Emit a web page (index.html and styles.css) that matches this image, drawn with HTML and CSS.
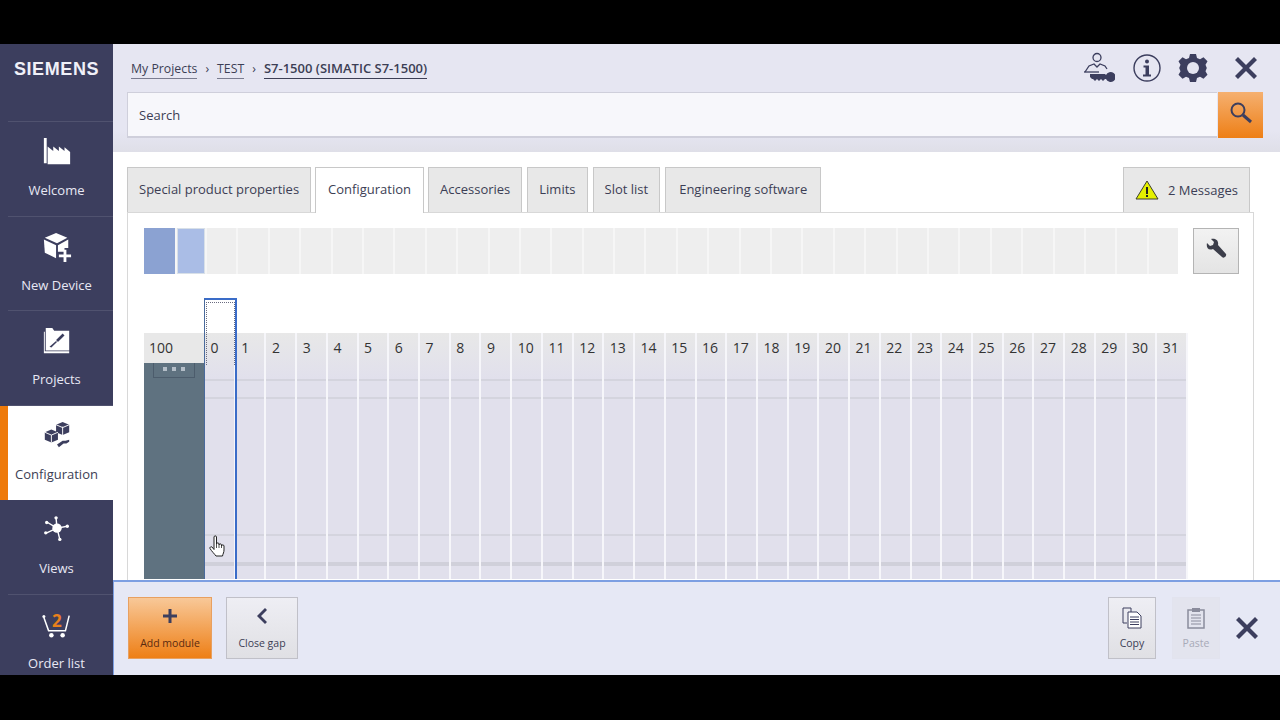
FILE: index.html
```html
<!DOCTYPE html>
<html lang="en">
<head>
  <meta charset="UTF-8" />
  <title>S7-1500 - Configuration</title>
  <link rel="stylesheet" href="styles.css">
</head>
<body>

<div class="app">
  <nav class="sidebar">
    <div class="brand">SIEMENS</div>
    <a class="nav-item">
      <svg class="nav-icon" viewBox="0 0 32 32"><path d="M2 1h3v27H2zM6 10l6 5v-5l6 5v-5l6 5v-4l6 5v13H6z" fill="#fff"/></svg>
      <span>Welcome</span>
    </a>
    <a class="nav-item">
      <svg class="nav-icon" viewBox="0 0 32 32"><path d="M15 1l12 5-11 6L3 6z" fill="#fff"/><path d="M2 8l13 6v14L3 22z" fill="#fff"/><path d="M17 14l11-6v9h-4v4h-7z" fill="#fff"/><path d="M23 19h3v5h5v3h-5v5h-3v-5h-5v-3h5z" fill="#fff"/></svg>
      <span>New Device</span>
    </a>
    <a class="nav-item">
      <svg class="nav-icon" viewBox="0 0 32 32"><path d="M4 2h7l2 3h16v21H4z" fill="#fff"/><path d="M2 27h27v2H2zM2 6h1v21H2z" fill="#fff"/><path d="M22 8l2 2-7 7-2-2zM15 16l1 1-6 6-2-1z" fill="#3c3e5e"/></svg>
      <span>Projects</span>
    </a>
    <a class="nav-item active">
      <svg class="nav-icon" viewBox="0 0 32 32"><path d="M22 1l7 3v8l-7 3-7-3V4z" fill="#3c3e5e"/><path d="M10 9l7 3v8l-7 3-7-3v-8z" fill="#3c3e5e"/><path d="M16 25l6-4 3 0 4-1 0 2-3 2-3 0-5 4z" fill="#3c3e5e"/><path d="M22 6v9M15 4l7 3 7-3M3 12l7 3v8M10 15l7-3" stroke="#fff" fill="none"/></svg>
      <span>Configuration</span>
    </a>
    <a class="nav-item">
      <svg class="nav-icon" viewBox="0 0 32 32"><g stroke="#fff" stroke-width="1.5"><path d="M16 14L15 3M16 14l11-2M16 14l-10-6M16 14L5 19M16 14l3 12"/></g><circle cx="16" cy="14" r="5" fill="#fff"/><g fill="#fff"><circle cx="15" cy="3" r="1.8"/><circle cx="27" cy="12" r="1.8"/><circle cx="5" cy="8" r="1.8"/><circle cx="4" cy="19" r="1.8"/><circle cx="19" cy="26" r="1.8"/></g></svg>
      <span>Views</span>
    </a>
    <a class="nav-item cart">
      <svg class="nav-icon" viewBox="0 0 32 32"><path d="M2 8l5 14h18l4-16" stroke="#fff" stroke-width="1.6" fill="none"/><circle cx="2" cy="7" r="1.6" fill="#fff"/><circle cx="10" cy="27" r="2.4" fill="#fff"/><circle cx="22" cy="27" r="2.4" fill="#fff"/></svg>
      <b class="cart-count">2</b>
      <span>Order list</span>
    </a>
  </nav>

  <div class="main">
    <header class="top">
      <div class="crumbs-row">
        <div class="crumbs">
          <a>My Projects</a><i>›</i><a>TEST</a><i>›</i><a class="current">S7-1500 (SIMATIC S7-1500)</a>
        </div>
        <div class="top-icons">
          <svg width="32" height="32" viewBox="0 0 32 32"><circle cx="14" cy="5.500" r="4" fill="none" stroke="#3c3e5e" stroke-width="1.3"/><path d="M2 20l4-6 5-2 3 3 3-3 5 2 2 3" fill="none" stroke="#3c3e5e" stroke-width="1.3"/><path d="M1 20h15" stroke="#3c3e5e" stroke-width="1.3"/><path d="M7 22h15l1 1a5 5 0 1 1 0 4l-1 0-2 2-2-2-2 2-2-2-2 2-2-2H9l-2-2z" fill="#3c3e5e"/></svg>
          <svg width="30" height="30" viewBox="0 0 30 30"><circle cx="15" cy="15" r="13" fill="none" stroke="#3c3e5e" stroke-width="1.4"/><circle cx="15" cy="8.5" r="2" fill="#3c3e5e"/><path d="M11.5 12.500h5.500v9h2v2h-8v-2h2.500v-7h-2z" fill="#3c3e5e"/></svg>
          <svg width="30" height="30" viewBox="0 0 30 30"><path d="M12 1h6l1 4 3 1.300 3.500-2 4 4-2 3.500L28.800 15l-1.300 3.200 2 3.500-4 4-3.500-2-3 1.300-1 4h-6l-1-4-3-1.300-3.500 2-4-4 2-3.500L1.200 15l1.300-3.200-2-3.500 4-4 3.500 2 3-1.300z" fill="#3c3e5e"/><circle cx="15" cy="15" r="6" fill="#e4e4f0"/></svg>
          <svg class="close-top" width="24" height="24" viewBox="0 0 24 24"><path d="M4 1l8 8 8-8 3 3-8 8 8 8-3 3-8-8-8 8-3-3 8-8-8-8z" fill="#3c3e5e"/></svg>
        </div>
      </div>
      <div class="search-row">
        <div class="search">Search</div>
        <button class="search-btn">
          <svg width="24" height="24" viewBox="0 0 24 24"><circle cx="9" cy="9" r="6.500" fill="none" stroke="#3c3e5e" stroke-width="2"/><path d="M14 14l8 7" stroke="#3c3e5e" stroke-width="3"/></svg>
        </button>
      </div>
    </header>

    <section class="content">
      <div class="tabs">
        <div class="tab">Special product properties</div>
        <div class="tab active">Configuration</div>
        <div class="tab">Accessories</div>
        <div class="tab">Limits</div>
        <div class="tab">Slot list</div>
        <div class="tab wide">Engineering software</div>
        <div class="tab messages">
          <svg width="24" height="20" viewBox="0 0 24 20"><path d="M12 1l11 18H1z" fill="#e4f000" stroke="#3c3e2e"/><path d="M11 7h2v7h-2zM11 15h2v2h-2z" fill="#222"/></svg>
          2 Messages
        </div>
      </div>

      <div class="panel">
        <div class="overview">
          <div class="strip">
            <div class="cell used"></div>
            <div class="cell picked"></div>
            <div class="cell"></div><div class="cell"></div><div class="cell"></div><div class="cell"></div>
            <div class="cell"></div><div class="cell"></div><div class="cell"></div><div class="cell"></div>
            <div class="cell"></div><div class="cell"></div><div class="cell"></div><div class="cell"></div>
            <div class="cell"></div><div class="cell"></div><div class="cell"></div><div class="cell"></div>
            <div class="cell"></div><div class="cell"></div><div class="cell"></div><div class="cell"></div>
            <div class="cell"></div><div class="cell"></div><div class="cell"></div><div class="cell"></div>
            <div class="cell"></div><div class="cell"></div><div class="cell"></div><div class="cell"></div>
            <div class="cell"></div><div class="cell"></div><div class="cell"></div>
          </div>
          <button class="wrench">
            <svg width="24" height="24" viewBox="0 0 24 24"><path d="M3 6l3 3 3-1 1-3-3-3c4-1 8 1 7 6l8 9c1 2-2 5-4 3l-9-8C4 14 2 10 3 6z" fill="#3c3e4a"/></svg>
          </button>
        </div>

        <div class="rack">
          <div class="rail">
            <div class="rail-label">100</div>
            <div class="rail-body"><div class="rail-clip"><i></i><i></i><i></i></div></div>
          </div>
          <div class="slots">
            <div class="slot">0</div><div class="slot">1</div><div class="slot">2</div><div class="slot">3</div>
            <div class="slot">4</div><div class="slot">5</div><div class="slot">6</div><div class="slot">7</div>
            <div class="slot">8</div><div class="slot">9</div><div class="slot">10</div><div class="slot">11</div>
            <div class="slot">12</div><div class="slot">13</div><div class="slot">14</div><div class="slot">15</div>
            <div class="slot">16</div><div class="slot">17</div><div class="slot">18</div><div class="slot">19</div>
            <div class="slot">20</div><div class="slot">21</div><div class="slot">22</div><div class="slot">23</div>
            <div class="slot">24</div><div class="slot">25</div><div class="slot">26</div><div class="slot">27</div>
            <div class="slot">28</div><div class="slot">29</div><div class="slot">30</div><div class="slot">31</div>
          </div>
          <div class="slot-frame"><div class="slot-dots"></div></div>
          <svg class="cursor" width="18" height="22" viewBox="0 0 18 22"><path d="M5 2c0-1.500 2.500-1.500 2.500 0v7c0-1.500 2.500-1.500 2.500 0v1c0-1.500 2.500-1.500 2.500 0v1c0-1.500 2.500-1.500 2.500 0v4c0 2.500-1 3.500-1.500 6H7C5.500 19 2.500 16 1 13.500c-.5-1.200 1-2.300 2-1.500l2 2.500z" fill="#fff" stroke="#222" stroke-width="1"/><path d="M7.500 9v4M10 10v3M12.500 11v2" stroke="#222" stroke-width=".8"/></svg>
        </div>
      </div>
    </section>

    <footer class="actions">
      <button class="act add">
        <svg width="18" height="18" viewBox="0 0 18 18"><path d="M7.500 2h3v5.500H16v3h-5.500V16h-3v-5.500H2v-3h5.500z" fill="#3c3e5e"/></svg>
        <span>Add module</span>
      </button>
      <button class="act gap">
        <svg width="18" height="18" viewBox="0 0 18 18"><path d="M12 1l2 2-6 6 6 6-2 2-8-8z" fill="#3c3e5e"/></svg>
        <span>Close gap</span>
      </button>
      <div class="spacer"></div>
      <button class="act copy">
        <svg width="22" height="22" viewBox="0 0 22 22"><path d="M2 1h8v4M2 1v15h4" fill="none" stroke="#3c3e5e"/><path d="M7 5h9l4 4v12H7z" fill="#fff" stroke="#3c3e5e"/><path d="M9 10h9M9 12.500h9M9 15h9M9 17.500h9" stroke="#3c3e5e"/></svg>
        <span>Copy</span>
      </button>
      <button class="act paste">
        <svg width="20" height="22" viewBox="0 0 20 22"><rect x="2" y="3" width="16" height="18" fill="none" stroke="#8a8c9c" stroke-width="1.500"/><rect x="6" y="1" width="8" height="4" fill="#8a8c9c"/><path d="M5 8h10M5 11h10M5 14h10M5 17h10" stroke="#8a8c9c"/></svg>
        <span>Paste</span>
      </button>
      <svg class="close-bottom" width="24" height="24" viewBox="0 0 24 24"><path d="M4 1l8 8 8-8 3 3-8 8 8 8-3 3-8-8-8 8-3-3 8-8-8-8z" fill="#3c3e5e"/></svg>
    </footer>
  </div>
</div>

</body>
</html>
```
FILE: styles.css
```css
body {
  margin: 0;
  height: 720px;
  overflow: hidden;
  background-color: #000;
  font-family: 'Open Sans', 'Noto Sans', sans-serif;
  font-size: 13px;
  color: #3c3e55;
}
.app {
  display: grid;
  grid-template-columns: 113px 1fr;
  grid-template-rows: 631px;
  height: 631px;
  margin-top: 44px;
}
button {
  font-family: inherit;
  cursor: pointer;
}

/* left menu */
.sidebar {
  display: flex;
  flex-direction: column;
  background-color: #3c3e5e;
  color: #e8e8f4;
  overflow: hidden;
}
.brand {
  flex: none;
  height: 78px;
  box-sizing: border-box;
  padding-top: 15px;
  margin-left: 8px;
  padding-right: 8px;
  text-align: center;
  border-bottom: 1px solid #50526f;
  font-family: 'Liberation Sans', sans-serif;
  font-weight: bold;
  font-size: 18px;
  letter-spacing: 0.6px;
  color: #f0f0f8;
}
.nav-item {
  position: relative;
  flex: none;
  height: 94.5px;
  box-sizing: border-box;
  display: flex;
  flex-direction: column;
  align-items: center;
  padding-top: 15px;
  margin-left: 8px;
  padding-right: 8px;
  border-bottom: 1px solid #50526f;
}
.nav-item span {
  margin-top: 14px;
  line-height: 18px;
}
.nav-icon {
  width: 30px;
  height: 30px;
}
.nav-item.active {
  margin-left: 0;
  background-color: #fff;
  color: #3c3e55;
  border-left: 8px solid #ee7a0a;
  border-bottom: none;
}
.nav-item.cart {
  border-bottom: none;
}
.cart-count {
  position: absolute;
  top: 14px;
  left: 44px;
  font-size: 17px;
  color: #e8801c;
}

/* header */
.main {
  display: flex;
  flex-direction: column;
  min-width: 0;
  min-height: 0;
  overflow: hidden;
}
.top {
  height: 108px;
  flex: none;
  box-sizing: border-box;
  padding: 0 17px 0 14px;
  background: linear-gradient(#e6e6f2 80%, #dfdfe8);
}
.crumbs-row {
  display: flex;
  align-items: center;
  justify-content: space-between;
  height: 48px;
}
.crumbs {
  padding-left: 4px;
  font-size: 12.3px;
}
.crumbs a {
  border-bottom: 1px solid #7a7c90;
  padding-bottom: 1px;
}
.crumbs i {
  font-style: normal;
  margin: 0 8px;
}
.crumbs .current {
  border-bottom-color: #3c3e55;
  font-size: 13px;
  font-weight: 600;
}
.top-icons {
  display: flex;
  align-items: center;
  gap: 16px;
  margin-right: 5px;
}
.top-icons svg:first-child {
  margin-right: 1px;
}
.close-top {
  margin-left: 10px;
}
.search-row {
  display: flex;
  height: 46px;
  gap: 1px;
}
.search {
  flex: 1;
  box-sizing: border-box;
  padding-left: 11px;
  line-height: 44px;
  background-color: #f7f7fb;
  border: 1px solid #cfcfdb;
  border-width: 1px 0 2px 1px;
}
.search-btn {
  width: 45px;
  padding: 0;
  border: none;
  background: linear-gradient(#f5b070, #ee7f16);
}

/* tabs and panel */
.content {
  flex: 1;
  min-height: 0;
  overflow: hidden;
  background-color: #fff;
  padding: 15px 26px 0 14px;
}
.tabs {
  display: flex;
  gap: 5px;
  height: 45px;
}
.tab {
  box-sizing: border-box;
  padding: 0 11px;
  line-height: 43px;
  background-color: #e8e8e8;
  border: 1px solid #c8c8c8;
  border-bottom: none;
  white-space: nowrap;
}
.tab.wide {
  padding: 0 13px;
}
.tab.active {
  background-color: #fff;
  height: 46px;
  padding: 0 12px;
  margin: 0 -1px;
  position: relative;
  z-index: 1;
}
.tab.messages {
  display: flex;
  align-items: center;
  gap: 9px;
  margin-left: auto;
  margin-right: 4px;
}
.panel {
  border: 1px solid #d8d8d8;
  border-bottom: none;
  padding: 15px 14px 0 16px;
  height: 400px;
}
.overview {
  display: flex;
  justify-content: space-between;
  align-items: flex-start;
}
.strip {
  display: flex;
  gap: 2px;
  width: 1034px;
  height: 46px;
  background-color: #f6f6f6;
}
.cell {
  flex: 1;
  background-color: #eeeeee;
}
.cell.used {
  flex: 0 0 31px;
  background-color: #8ba2d2;
}
.cell.picked {
  flex: 0 0 28px;
  box-sizing: border-box;
  background-color: #aabde6;
  border: 1px solid #d8e0e8;
}
.wrench {
  width: 46px;
  height: 46px;
  padding: 0;
  border: 1px solid #b4b4b4;
  background: linear-gradient(#f2f2f2, #e4e4e4);
}

/* rack */
.rack {
  position: relative;
  display: flex;
  margin-top: 59px;
  width: 1044px;
  height: 246px;
  font-size: 14px;
  color: #333;
}
.rail {
  flex: 0 0 61px;
  display: flex;
  flex-direction: column;
}
.rail-label {
  height: 30px;
  line-height: 29px;
  padding-left: 5px;
  background-color: #e8e8e8;
}
.rail-body {
  flex: 1;
  background-color: #5f7280;
}
.rail-clip {
  display: flex;
  justify-content: center;
  gap: 5px;
  box-sizing: border-box;
  width: 42px;
  height: 15px;
  padding-top: 4px;
  margin-left: 9px;
  border: 1px solid #4c5c6c;
  border-top: none;
}
.rail-clip i {
  width: 4px;
  height: 4px;
  background-color: #b4bec8;
}
.slots {
  flex: 1;
  display: grid;
  grid-template-columns: repeat(32, 1fr);
}
.slot {
  padding-left: 5.500px;
  line-height: 29px;
  border-right: 2px solid #f6f6fa;
  background-color: #e1e0ec;
  background-image:
    linear-gradient(#e8e8e8, #e1e0ec 46px),
    linear-gradient(#d4d4de, #d4d4de),
    linear-gradient(#d4d4de, #d4d4de),
    linear-gradient(#d4d4de, #d4d4de),
    linear-gradient(#d0d0da, #d0d0da);
  background-size: 100% 46px, 100% 2px, 100% 2px, 100% 2px, 100% 4px;
  background-position: 0 0, 0 46px, 0 64px, 0 201px, 0 229px;
  background-repeat: no-repeat;
}
.slot-frame {
  position: absolute;
  left: 60px;
  top: -35px;
  bottom: 0;
  width: 33px;
  box-sizing: border-box;
  border: 2px solid #3a6cc8;
  border-bottom: none;
  border-left: 1px solid #4a6a9c;
}
.slot-dots {
  height: 62px;
  margin: 2px 0 0 1px;
  border: 1px dotted #6a6c80;
  border-bottom: none;
}
.cursor {
  position: absolute;
  left: 65px;
  top: 202px;
}

/* bottom actions */
.actions {
  flex: none;
  display: flex;
  align-items: center;
  height: 95px;
  box-sizing: border-box;
  gap: 14px;
  padding: 0 21px 2px 14px;
  background-color: #e6e8f5;
  border-top: 2px solid #7d9fe2;
  border-left: 1px solid #7d9fe2;
}
.spacer {
  flex: 1;
}
.act {
  display: flex;
  flex-direction: column;
  align-items: center;
  justify-content: space-between;
  box-sizing: border-box;
  height: 62px;
  padding: 9px 0 8px;
  border: 1px solid #c0c0c8;
  font-size: 10.5px;
  color: #3c3e55;
  background: linear-gradient(#eeeef4, #e0e0e4);
}
.act.add {
  width: 84px;
  color: #5a2a10;
  background: linear-gradient(#f8c898, #ee7f16);
  border-color: #e8a060;
}
.act.gap {
  width: 72px;
}
.act.copy {
  width: 48px;
}
.act.paste {
  width: 48px;
  margin-left: 2px;
  border-color: #e2e3ee;
  background: #e3e4ee;
  color: #a8aab8;
}
.close-bottom {
  margin-left: 1px;
}
```
